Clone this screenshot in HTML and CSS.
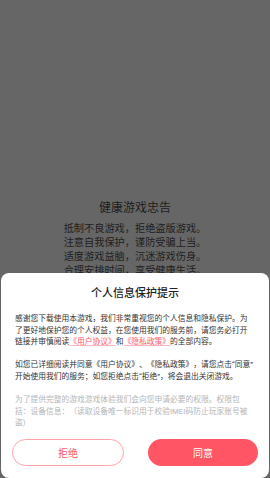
FILE: index.html
```html
<!DOCTYPE html>
<html lang="zh-CN">
<head>
  <meta charset="UTF-8">
  <meta name="viewport" content="width=device-width, initial-scale=1.0">
  <title>个人信息保护提示</title>
  <link rel="stylesheet" href="styles.css">
</head>
<body>
  <!-- 背景：健康游戏忠告 -->
  <div class="screen">
    <div class="notice">
      <h1 class="notice-title">健康游戏忠告</h1>
      <p class="notice-line">抵制不良游戏，拒绝盗版游戏。</p>
      <p class="notice-line">注意自我保护，谨防受骗上当。</p>
      <p class="notice-line">适度游戏益脑，沉迷游戏伤身。</p>
      <p class="notice-line">合理安排时间，享受健康生活。</p>
    </div>
  </div>

  <!-- 隐私弹窗 -->
  <div class="sheet">
    <h2 class="sheet-title">个人信息保护提示</h2>
    <div class="sheet-body">
      <p>感谢您下载使用本游戏，我们非常重视您的个人信息和隐私保护。为了更好地保护您的个人权益，在您使用我们的服务前，请您务必打开链接并审慎阅读<a class="link">《用户协议》</a>和<a class="link">《隐私政策》</a>的全部内容。</p>
      <p>如您已详细阅读并同意《用户协议》、《隐私政策》，请您点击“同意”开始使用我们的服务；如您拒绝点击“拒绝”，将会退出关闭游戏。</p>
      <p class="muted">为了提供完整的游戏游戏体验我们会向您申请必要的权限。权限包括：设备信息：（读取设备唯一标识用于校验IMEI码防止玩家账号被盗)</p>
    </div>
    <div class="actions">
      <button class="btn btn-reject">拒绝</button>
      <button class="btn btn-agree">同意</button>
    </div>
  </div>
</body>
</html>
```

FILE: styles.css
```css
body {
  margin: 0;
  background-color: #666;
  font-family: Roboto, "Noto Sans CJK SC", sans-serif;
}

.screen {
  height: 478px;
  overflow: hidden;
}

/* 健康游戏忠告 */
.notice {
  padding-top: 200px;
  text-align: center;
  color: #1e1e1e;
}

.notice-title {
  margin: 0 0 6px;
  font-size: 12px;
  line-height: 16px;
  font-weight: normal;
}

.notice-line {
  margin: 0;
  font-size: 10.2px;
  line-height: 14px;
  text-spacing-trim: space-all;
}

/* 弹窗 */
.sheet {
  position: fixed;
  left: 1px;
  right: 1px;
  bottom: 0;
  background-color: #fff;
  border-radius: 8px;
  padding: 13px 0 12px;
}

.sheet-title {
  margin: 0 0 11px;
  text-align: center;
  font-size: 11px;
  line-height: 16px;
  font-weight: 500;
  color: #222;
}

.sheet-body {
  padding: 0 14px;
  font-size: 7.75px;
  line-height: 11.6px;
  color: #333;
  text-spacing-trim: space-all;
}

.sheet-body p {
  margin: 0 0 11.6px;
}

.sheet-body p:last-child {
  margin-bottom: 0;
}

.muted {
  color: #b5b5b5;
}

.link {
  color: #ff5a6a;
  text-decoration: underline;
  text-decoration-color: #ffb3ba;
  text-decoration-thickness: 1px;
}

.actions {
  display: flex;
  gap: 24px;
  padding: 0 11px;
  margin-top: 10px;
}

.btn {
  flex: 1;
  height: 27px;
  border-radius: 14px;
  font-family: inherit;
  font-size: 10px;
  box-sizing: border-box;
  padding: 0;
}

.btn-reject {
  background-color: #fff;
  border: 1px solid #ffa3ab;
  color: #ff5a6a;
}

.btn-agree {
  background-color: #ff5565;
  border: none;
  color: #fff;
}
```
